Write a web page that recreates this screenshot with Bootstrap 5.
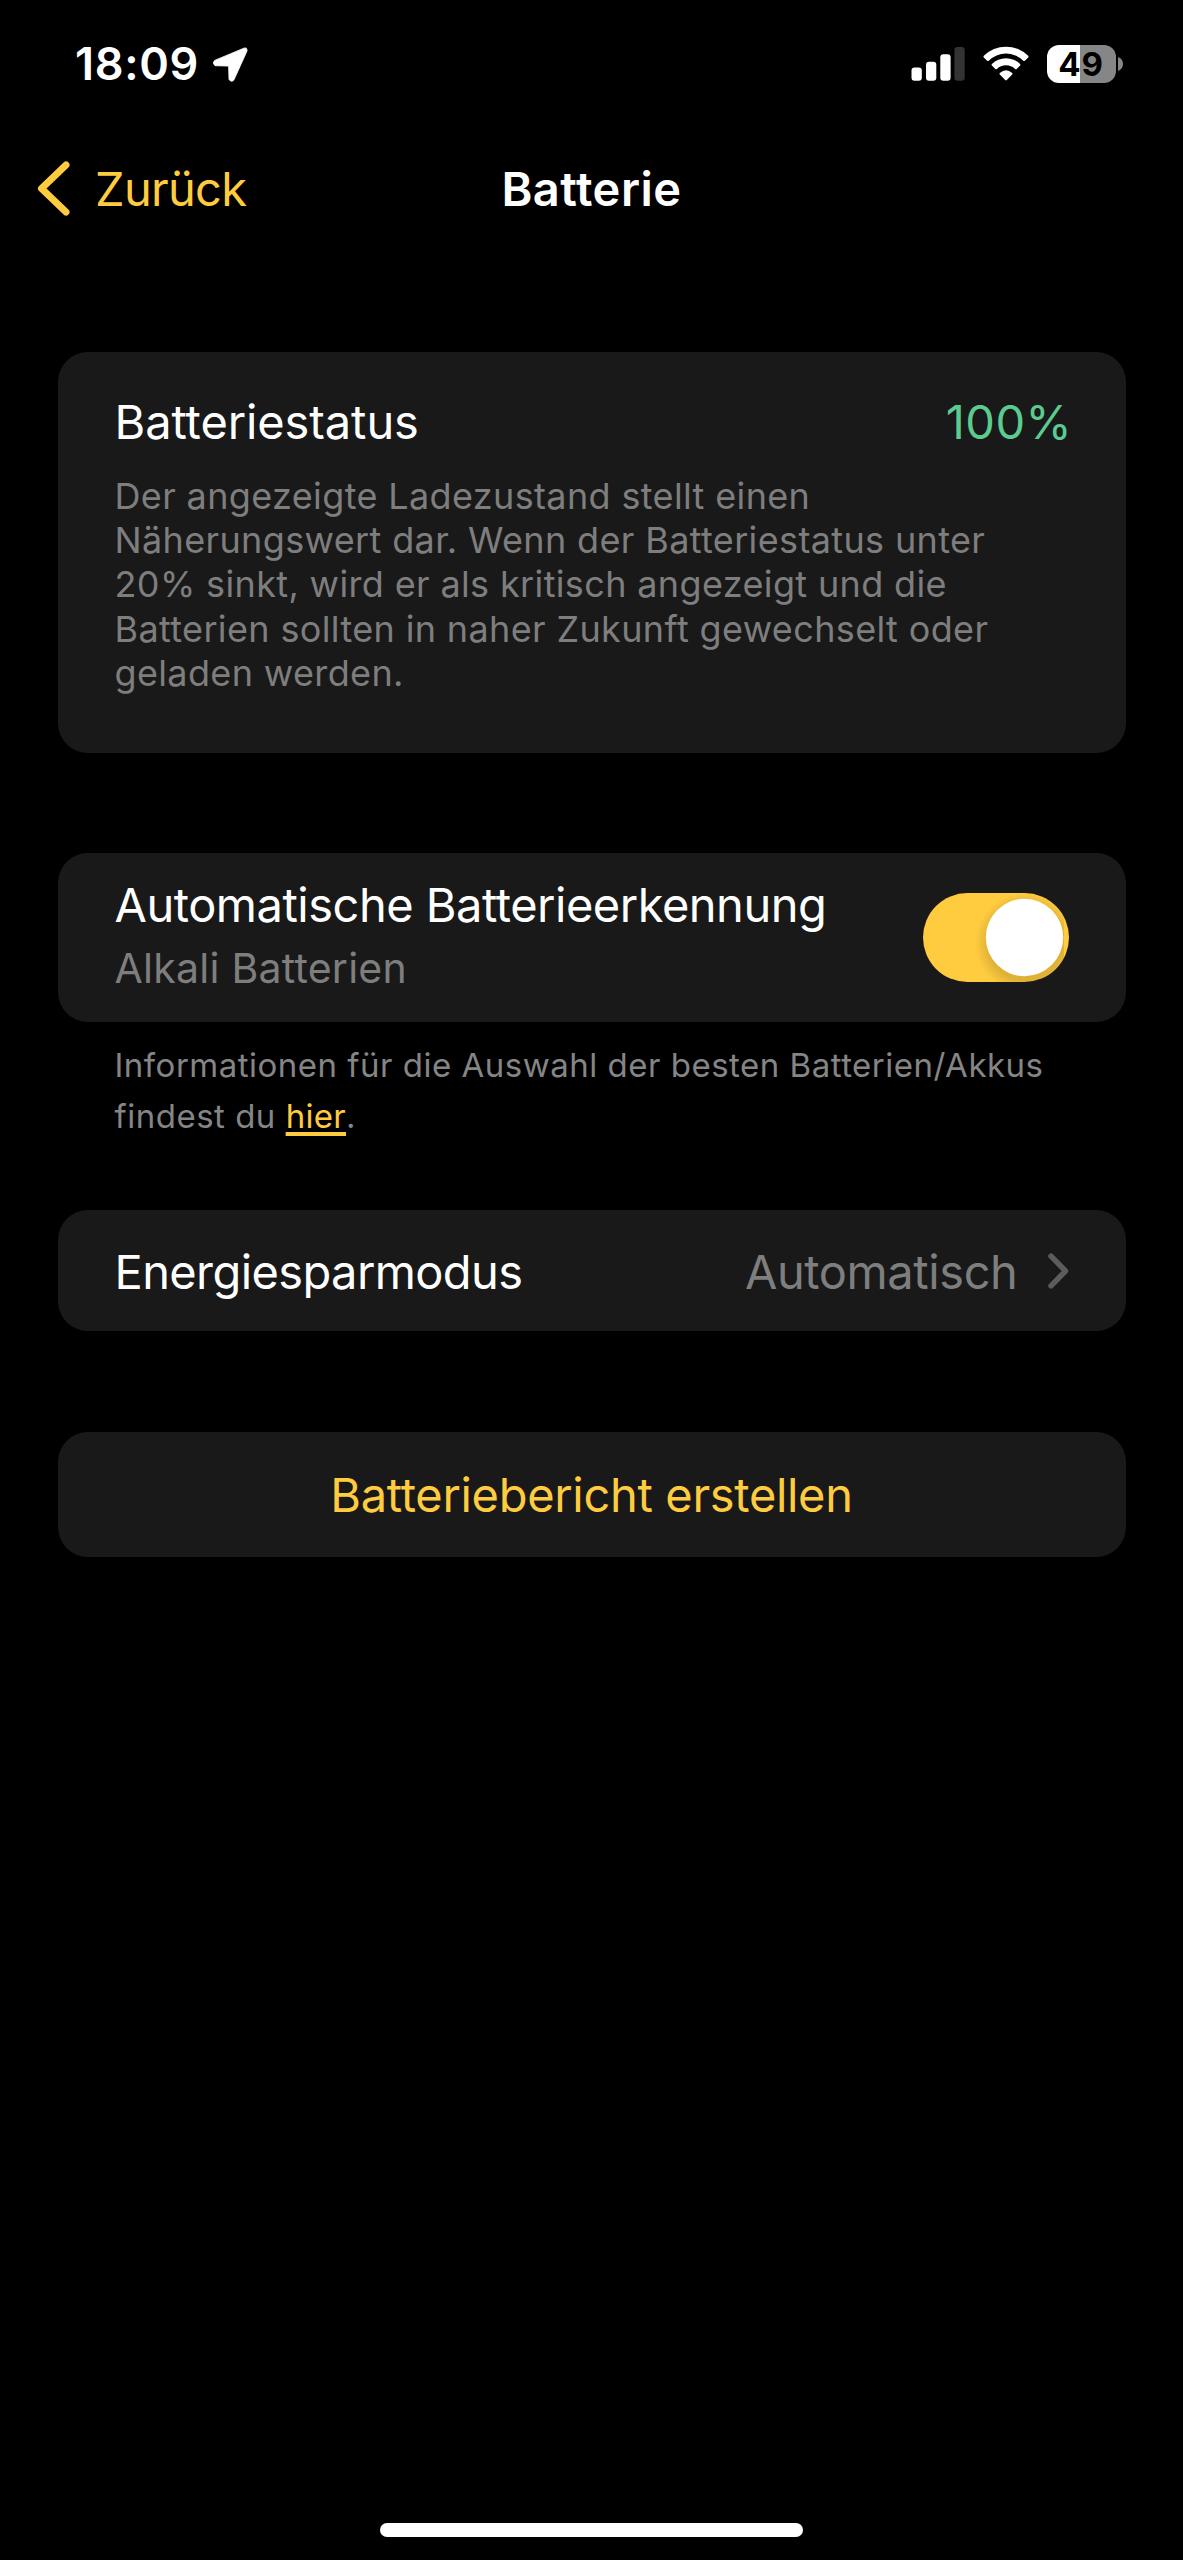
<!DOCTYPE html>
<html lang="de" data-bs-theme="dark">
<head>
<meta charset="utf-8">
<meta name="viewport" content="width=device-width, initial-scale=1">
<title>Batterie</title>
<link href="https://cdn.jsdelivr.net/npm/bootstrap@5.3.0/dist/css/bootstrap.min.css" rel="stylesheet">
<style>
  :root { --accent: #ffcb3f; --tile: #191919; --muted: #7e7e7e; }
  body { background: #000; color: #fff; font-family: Inter, "Liberation Sans", sans-serif; font-size: 47px; line-height: 60px; }
  .screen { min-height: 2560px; }
  svg { display: block; flex: none; }

  .status-bar { height: 128px; padding: 0 60.5px 0 75px; }
  .clock { font-size: 45px; font-weight: 600; letter-spacing: .65px; }
  .location { margin-left: 13px; }
  .signal { margin-right: 18px; }
  .wifi { margin-right: 18px; }
  .battery { width: 69px; height: 38px; border-radius: 12px; background: linear-gradient(90deg, #fff 33px, #868686 33px); color: #000;
             font-size: 33px; font-weight: 700; line-height: 38px; letter-spacing: .9px; }
  .battery-tip { margin-left: 2px; }

  .title-bar { height: 121px; padding: 0 37px; }
  .back { width: 340px; color: var(--accent); text-decoration: none; letter-spacing: -.68px; }
  .back svg { margin-right: 25px; }
  .page-title { font-size: 47px; font-weight: 600; line-height: 60px; letter-spacing: .5px; }

  .settings { padding: 103px 57.5px 0; }
  .tile { background: var(--tile); border: 0; border-radius: 30px; padding: 0 57px; }
  .tile-health { height: 400.5px; padding-top: 40px; }
  .health-label { letter-spacing: -.1px; }
  .percent { color: #5bcb8f; letter-spacing: .4px; margin-right: -3.5px; }
  .health-note { color: var(--muted); font-size: 36px; line-height: 44.35px; letter-spacing: .36px; margin-top: 21.5px; width: 900px; }
  .tile-detect { height: 169px; margin-top: 100px; }
  .detect-label { letter-spacing: -.49px; margin-top: -6px; }
  .detect-type { color: var(--muted); font-size: 41px; line-height: 50px; letter-spacing: .25px; margin-top: 8px; }
  .form-switch .form-check-input.toggle { width: 146px; height: 89px; margin: 0; float: none; border: 0; border-radius: 45px; box-shadow: none; opacity: 1;
    background-color: var(--accent); background-position: right 5px center; background-size: auto;
    background-image: url("data:image/svg+xml,%3csvg xmlns='http://www.w3.org/2000/svg' width='97' height='89' viewBox='0 0 97 89'%3e%3cdefs%3e%3cradialGradient id='s'%3e%3cstop offset='.74' stop-color='%23000' stop-opacity='.13'/%3e%3cstop offset='1' stop-color='%23000' stop-opacity='0'/%3e%3c/radialGradient%3e%3c/defs%3e%3ccircle cx='58.5' cy='50' r='50' fill='url(%23s)'/%3e%3ccircle cx='57.5' cy='44.5' r='38.7' fill='%23fff'/%3e%3c/svg%3e"); }
  .info { color: #858585; font-size: 33px; line-height: 50.5px; letter-spacing: .5px; padding: 0 57px; margin: 18.8px 0 0; }
  .info a { color: var(--accent); text-decoration-thickness: 3.5px; text-underline-offset: 3.5px; text-decoration-skip-ink: none; letter-spacing: .3px; }
  .tile-mode { height: 121.5px; margin-top: 68.7px; padding-top: 2px; letter-spacing: -.6px; color: #fff; }
  .mode-value { color: var(--muted); letter-spacing: -.41px; }
  .mode-value svg { margin-left: 30px; }
  .tile-report { height: 125.5px; margin-top: 100.5px; padding: 1px 0 0; color: var(--accent); font-size: 47px; line-height: 60px; letter-spacing: -.32px; }
  .home-bar { width: 423px; height: 14px; margin: auto auto 23px; background: #fff; border-radius: 7px; }
</style>
</head>
<body>
<div class="screen d-flex flex-column">
  <header>
    <div class="status-bar d-flex align-items-center justify-content-between">
      <div class="d-flex align-items-center">
        <span class="clock">18:09</span>
        <svg class="location" width="37" height="37" viewBox="0 0 37 37"><path d="M31.8 2.2 2.6 14.4Q-.2 17 3 19.7L16.6 20.1 17 33.4Q19.6 37 22 33.8L35 5Q35.4.9 31.8 2.2Z" fill="#fff" stroke="#fff" stroke-width=".8" stroke-linejoin="round"/></svg>
      </div>
      <div class="d-flex align-items-center">
        <svg class="signal" width="54" height="36" viewBox="0 0 54 36" fill="#fff"><rect x=".5" y="21.5" width="10.3" height="13.3" rx="3"/><rect x="15" y="15.8" width="10.3" height="19" rx="3"/><rect x="29.3" y="8.3" width="10.3" height="26.5" rx="3"/><rect x="43.4" y="1" width="10.3" height="33.8" rx="3" fill="#333"/></svg>
        <svg class="wifi" width="46" height="36" viewBox="0 0 46 36" fill="#fff"><path d="M.8 9.8a31.5 31.5 0 0 1 44.4 0q.7.8 0 1.6l-3.3 3.3q-.8.7-1.6 0a24.6 24.6 0 0 0-34.6 0q-.8.7-1.6 0L.8 11.4q-.7-.8 0-1.6Z"/><path d="M8.9 18a20 20 0 0 1 28.2 0q.7.8 0 1.6l-3.4 3.3q-.8.7-1.6 0a13 13 0 0 0-18.2 0q-.8.7-1.6 0L8.9 19.6q-.7-.8 0-1.6Z"/><path d="M16.8 27q6.2-5.4 12.4 0 .8.7 0 1.5l-5.4 5.6q-.8.8-1.6 0l-5.4-5.6q-.8-.8 0-1.5Z"/></svg>
        <div class="battery d-flex justify-content-center">49</div>
        <svg class="battery-tip" width="5" height="14" viewBox="0 0 5 14"><path d="M0 0Q5 2 5 7T0 14Z" fill="#868686"/></svg>
      </div>
    </div>
    <nav class="title-bar d-flex align-items-center justify-content-between">
      <a class="back d-flex align-items-center" href="#"><svg width="33" height="55" viewBox="0 0 33 55"><path d="M29 4 4.5 27.5 29 51" fill="none" stroke="#ffcb3f" stroke-width="7" stroke-linecap="round" stroke-linejoin="round"/></svg>Zurück</a>
      <h1 class="page-title mb-0">Batterie</h1>
      <span class="back"></span>
    </nav>
  </header>

  <main class="settings">
    <section class="card tile tile-health">
      <div class="d-flex justify-content-between"><span class="health-label">Batteriestatus</span><span class="percent">100%</span></div>
      <p class="health-note mb-0">Der angezeigte Ladezustand stellt einen<br>Näherungswert dar. Wenn der Batteriestatus unter<br>20% sinkt, wird er als kritisch angezeigt und die<br>Batterien sollten in naher Zukunft gewechselt oder<br>geladen werden.</p>
    </section>

    <section class="card tile tile-detect flex-row align-items-center justify-content-between">
      <label for="detect"><span class="detect-label d-block">Automatische Batterieerkennung</span><span class="detect-type d-block">Alkali Batterien</span></label>
      <div class="form-check form-switch d-flex p-0 m-0 flex-shrink-0"><input class="form-check-input toggle" type="checkbox" role="switch" id="detect" checked></div>
    </section>
    <p class="info">Informationen für die Auswahl der besten Batterien/Akkus<br>findest du <a href="#">hier</a>.</p>

    <a class="card tile tile-mode flex-row align-items-center justify-content-between text-decoration-none" href="#">
      <span>Energiesparmodus</span>
      <span class="mode-value d-flex align-items-center">Automatisch<svg width="21" height="39" viewBox="0 0 21 39"><path d="M3 4.2 17.5 19 3 33.8" fill="none" stroke="#5c5c5e" stroke-width="5.5" stroke-linecap="round" stroke-linejoin="round"/></svg></span>
    </a>

    <button class="btn tile tile-report w-100 d-flex align-items-center justify-content-center" type="button">Batteriebericht erstellen</button>
  </main>

  <div class="home-bar"></div>
</div>
<script src="https://cdn.jsdelivr.net/npm/bootstrap@5.3.0/dist/js/bootstrap.bundle.min.js"></script>
</body>
</html>
